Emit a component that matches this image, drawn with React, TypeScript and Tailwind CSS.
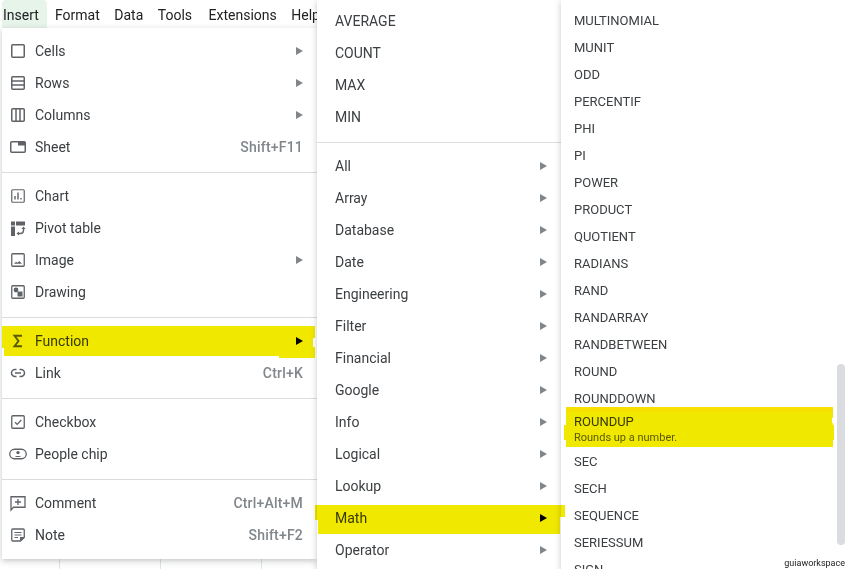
import React from "react";

const font = { fontFamily: "Roboto, sans-serif" };

function Ic({ children }: { children: React.ReactNode }) {
  return (
    <svg width="18" height="18" viewBox="0 0 18 18" fill="none" stroke="#5f6368" strokeWidth="1.5" className="shrink-0">
      {children}
    </svg>
  );
}

const icons: Record<string, React.ReactNode> = {
  cells: <Ic><rect x="2.75" y="2.75" width="12.5" height="12.5" rx="1" /></Ic>,
  rows: <Ic><rect x="2.75" y="2.75" width="12.5" height="12.5" rx="1" /><path d="M3 7h12M3 11h12" /></Ic>,
  columns: <Ic><rect x="2.75" y="2.75" width="12.5" height="12.5" rx="1" /><path d="M7 3v12M11 3v12" /></Ic>,
  sheet: <Ic><rect x="1.75" y="3.75" width="14.5" height="10.5" rx="1" /><rect x="9" y="4" width="7" height="3.5" fill="#5f6368" stroke="none" /></Ic>,
  chart: <Ic><rect x="2.75" y="2.75" width="12.5" height="12.5" rx="1" strokeWidth="1.2" /><path d="M6 12.5V9M9 12.5V5.5M12 12.5v-1.5" strokeWidth="1.4" /></Ic>,
  pivot: <Ic><path d="M2 2.5h4v4H2zM7 2.5h9v4H7zM2 7.5h4V17H2z" fill="#5f6368" stroke="none" /><path d="M9.5 14.5h2a3 3 0 0 0 3-3V9.5" strokeWidth="1.4" /><path d="M12.5 10l2-2.5 2 2.5zM10 12.5L7.5 14.5l2.5 2z" fill="#5f6368" stroke="none" /></Ic>,
  image: <Ic><rect x="2.75" y="2.75" width="12.5" height="12.5" rx="1" strokeWidth="1.3" /><path d="M5 12.8l2-2 1.5 1 1.7-1.8 2.8 2.8z" fill="#5f6368" stroke="none" /></Ic>,
  drawing: <Ic><rect x="2.75" y="2.75" width="12.5" height="12.5" rx="1" strokeWidth="1.3" /><circle cx="7" cy="7" r="2.4" fill="#5f6368" stroke="none" /><rect x="8.5" y="8.5" width="5" height="5" fill="#5f6368" stroke="none" /></Ic>,
  sigma: <Ic><path d="M13 3.8H5.5l4 5.2-4 5.2H13" strokeWidth="1.9" /></Ic>,
  link: <Ic><path d="M7.5 5.5H6a3.5 3.5 0 0 0 0 7h1.5M10.5 5.5H12a3.5 3.5 0 0 1 0 7h-1.5M6 9h6" /></Ic>,
  checkbox: <Ic><rect x="2.75" y="2.75" width="12.5" height="12.5" rx="1" strokeWidth="1.3" /><path d="M6 9.2l2.2 2.2L12.3 7" strokeWidth="1.3" /></Ic>,
  people: <Ic><rect x="0.75" y="4.25" width="16.5" height="9.5" rx="4.75" strokeWidth="1.3" /><circle cx="9" cy="7.6" r="1.7" fill="#5f6368" stroke="none" /><path d="M5.8 12c.6-1.5 5.8-1.5 6.4 0z" fill="#5f6368" stroke="none" /></Ic>,
  comment: <Ic><path d="M2 2.75h14v10.5H4.5L2 16z" strokeWidth="1.3" /><path d="M9 5v6M6 8h6" strokeWidth="1.3" /></Ic>,
  note: <Ic><path d="M3.75 3h10.5a1 1 0 0 1 1 1v7.5L11.5 15H3.75a1 1 0 0 1-1-1V4a1 1 0 0 1 1-1z" strokeWidth="1.3" /><path d="M5.5 6.5h7M5.5 9h7M5.5 11.5h3.5" strokeWidth="1.2" /><path d="M11 15v-4h4.5z" fill="#5f6368" stroke="none" /></Ic>,
};

function Arrow({ dark }: { dark?: boolean }) {
  return (
    <span
      className={
        dark
          ? "w-0 h-0 border-y-[4px] border-y-transparent border-l-[7px] border-l-[#000000]"
          : "w-0 h-0 border-y-[4px] border-y-transparent border-l-[7px] border-l-[#80868b]"
      }
    />
  );
}

function Row1({ icon, label, arrow, keys, dark }: { icon: string; label: string; arrow?: boolean; keys?: string; dark?: boolean }) {
  return (
    <div className="h-8 flex items-center pl-[7px] pr-[14px] text-[14px] text-[#3c4043]">
      <span className="w-[26px]">{icons[icon]}</span>
      <span>{label}</span>
      <span className="flex-1" />
      {arrow && <Arrow dark={dark} />}
      {keys && <span className="font-medium text-[#80868b] tracking-[0.2px]">{keys}</span>}
    </div>
  );
}

function Row2({ label, arrow = true, dark }: { label: string; arrow?: boolean; dark?: boolean }) {
  return (
    <div className="h-8 flex items-center justify-between pl-[18px] pr-[14px] text-[14px] text-[#3c4043]">
      <span>{label}</span>
      {arrow && <Arrow dark={dark} />}
    </div>
  );
}

const Sep = () => (
  <div className="h-[17px] pt-[1px] flex items-center">
    <div className="h-px w-full bg-[#dadce0]" />
  </div>
);

const col3a = ["MULTINOMIAL", "MUNIT", "ODD", "PERCENTIF", "PHI", "PI", "POWER", "PRODUCT", "QUOTIENT", "RADIANS", "RAND", "RANDARRAY", "RANDBETWEEN", "ROUND", "ROUNDDOWN"];
const col3b = ["SEC", "SECH", "SEQUENCE", "SERIESSUM", "SIGN"];

function Row3({ label }: { label: string }) {
  return <div className="h-[27px] shrink-0 flex items-center pl-[13px] text-[13px] text-[#3c4043]">{label}</div>;
}

export default function App() {
  return (
    <div className="relative w-[846px] h-[569px] overflow-hidden bg-white flex" style={font}>
      {/* Insert menu column */}
      <div className="w-[317px] shrink-0 flex flex-col relative">
        <div className="h-[28px] flex items-start gap-[14.5px] text-[14px] leading-[30px] text-[#202124] shrink-0 whitespace-nowrap">
          <span className="bg-[#e6f4ea] h-[28px] w-[45px] ml-[2px] rounded-t-[4px] pl-[1px] -mr-[6.5px] shrink-0">Insert</span>
          <span>Format</span>
          <span>Data</span>
          <span>Tools</span>
          <span className="ml-[2px]">Extensions</span>
          <span>Help</span>
        </div>
        <div className="h-[531px] ml-[2px] bg-white pt-[7px] shadow-[0_2px_6px_rgba(60,64,67,0.3)] relative shrink-0">
          <Row1 icon="cells" label="Cells" arrow />
          <Row1 icon="rows" label="Rows" arrow />
          <Row1 icon="columns" label="Columns" arrow />
          <Row1 icon="sheet" label="Sheet" keys="Shift+F11" />
          <Sep />
          <Row1 icon="chart" label="Chart" />
          <Row1 icon="pivot" label="Pivot table" />
          <Row1 icon="image" label="Image" arrow />
          <Row1 icon="drawing" label="Drawing" />
          <Sep />
          <Row1 icon="sigma" label="Function" arrow dark />
          <Row1 icon="link" label="Link" keys="Ctrl+K" />
          <Sep />
          <Row1 icon="checkbox" label="Checkbox" />
          <Row1 icon="people" label="People chip" />
          <Sep />
          <Row1 icon="comment" label="Comment" keys="Ctrl+Alt+M" />
          <Row1 icon="note" label="Note" keys="Shift+F2" />
        </div>
        <div className="flex-1 ml-[2px] flex">
          <div className="w-[58px] border-r border-[#e1e3e6]" />
          <div className="w-[101px] border-r border-[#e1e3e6]" />
          <div className="w-[101px] border-r border-[#e1e3e6]" />
        </div>
      </div>

      {/* Function categories */}
      <div className="w-[244px] shrink-0 bg-white pt-[5px] h-[569px] overflow-hidden shadow-[0_2px_6px_rgba(60,64,67,0.3)] relative">
        {["AVERAGE", "COUNT", "MAX", "MIN"].map((l) => (
          <Row2 key={l} label={l} arrow={false} />
        ))}
        <Sep />
        {["All", "Array", "Database", "Date", "Engineering", "Filter", "Financial", "Google", "Info", "Logical", "Lookup", "Math", "Operator"].map((l) => (
          <Row2 key={l} label={l} dark={l === "Math"} />
        ))}
      </div>

      {/* Math functions */}
      <div className="w-[285px] shrink-0 h-[569px] overflow-hidden bg-white pt-[7px] flex flex-col shadow-[0_2px_6px_rgba(60,64,67,0.3)] relative">
        {col3a.map((l) => (
          <Row3 key={l} label={l} />
        ))}
        <div className="h-[36px] shrink-0 pl-[13px] flex flex-col pt-[1.5px]">
          <span className="text-[13px] text-[#3c4043] leading-[15px]">ROUNDUP</span>
          <span className="text-[11px] text-[#5f6368] leading-[15px] mt-[1px]">Rounds up a number.</span>
        </div>
        {col3b.map((l) => (
          <Row3 key={l} label={l} />
        ))}
        <div className="absolute left-[276px] top-[364px] w-[8px] h-[181px] rounded-[4px] bg-[#dadce0]" />
      </div>

      {/* Marker highlights and watermark lie over the menus */}
      <svg width="846" height="569" className="absolute inset-0 mix-blend-multiply pointer-events-none">
        <path d="M2 326H315V338H313V347H315V358H279V356H4V348H2Z M315 505H565V517H560V534H318V520H315Z M566 407H833V418H832V423H833V425H834V440H833V447H566V440H564V425H566Z" fill="#f1e800" />
        <path d="M566 407H833V412H566Z" fill="#f5e000" />
      </svg>
      <span className="absolute right-px bottom-0 text-[9px] leading-[12px] text-[#202124]">guiaworkspace</span>
    </div>
  );
}
